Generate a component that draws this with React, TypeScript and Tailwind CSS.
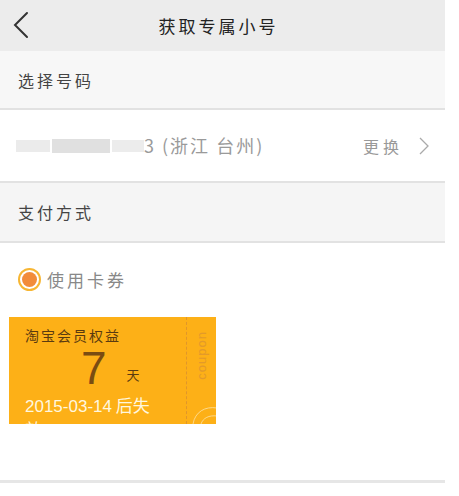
import React from 'react';

const cjk = { fontFamily: '"Noto Sans CJK SC", "Noto Sans", sans-serif' };
const latin = { fontFamily: '"Liberation Sans", Arial, sans-serif' };

export default function App() {
  return (
    <div className="w-[459px] h-[496px] bg-white overflow-hidden" style={cjk}>
      <div className="w-[445px]">
        {/* Header */}
        <div className="relative h-[51px] bg-[#ececec] flex items-center justify-center">
          <svg className="absolute left-[11px] top-[11px]" width="20" height="28" viewBox="0 0 20 28">
            <path d="M16 2 L4 14 L16 26" fill="none" stroke="#333" strokeWidth="2" strokeLinecap="round" />
          </svg>
          <h1 className="text-[17px] tracking-[3px] text-[#222] ml-[-8px]">获取专属小号</h1>
        </div>

        {/* 选择号码 */}
        <div className="h-[59px] bg-[#f7f7f7] flex items-center px-[18px] border-b-2 border-[#e2e2e2]">
          <span className="text-[16px] tracking-[3px] text-[#444]">选择号码</span>
        </div>

        {/* Number row */}
        <div className="h-[73px] bg-white flex items-center px-[16px] border-b-2 border-[#e2e2e2]">
          <div className="flex items-center">
            <div className="flex items-center gap-[2px] h-[16px] w-[128px]">
              <div className="h-[12px] w-[34px] bg-[#ebebeb]" />
              <div className="h-[14px] w-[58px] bg-[#e0e0e0]" />
              <div className="h-[12px] w-[32px] bg-[#ececec]" />
            </div>
            <span className="text-[18px] text-[#9a9a9a] tracking-[2px]">3 (浙江 台州)</span>
          </div>
          <div className="ml-auto flex items-center gap-[16px] text-[#999]">
            <span className="text-[16px] tracking-[4px]">更换</span>
            <svg width="10" height="18" viewBox="0 0 10 18">
              <path d="M1 1 L9 9 L1 17" fill="none" stroke="#aaa" strokeWidth="1.3" />
            </svg>
          </div>
        </div>

        {/* 支付方式 */}
        <div className="h-[60px] bg-[#f5f5f5] flex items-center px-[18px] border-b-2 border-[#e2e2e2]">
          <span className="text-[16px] tracking-[3px] text-[#444]">支付方式</span>
        </div>

        {/* Coupon area */}
        <div className="h-[240px] bg-white border-b-[3px] border-[#e6e6e6] pt-[24px]">
          <div className="flex items-center pl-[18px] gap-[6px]">
            <div className="w-[23px] h-[23px] rounded-full border-2 border-[#f7b633] flex items-center justify-center">
              <div className="w-[15px] h-[15px] rounded-full bg-[#f28c3a]" />
            </div>
            <span className="text-[17px] tracking-[3px] text-[#888]">使用卡券</span>
          </div>

          <div className="ml-[9px] mt-[24px] w-[207px] h-[107px] bg-[#fdb017] flex overflow-hidden">
            <div className="w-[177px] pl-[16px] pt-[8px] flex flex-col">
              <span className="text-[14px] tracking-[2px] text-[#5a3a10] leading-[20px]">淘宝会员权益</span>
              <div className="flex items-end pl-[56px] h-[48px]">
                <span className="text-[46px] leading-[46px] text-[#7a4c12] font-light" style={latin}>7</span>
                <span className="text-[13px] text-[#5a3a10] ml-[20px] mb-[6px]">天</span>
              </div>
              <span className="text-[17px] text-[#fff7df] leading-[24px] mt-[2px] whitespace-nowrap">
                <span style={latin}>2015-03-14</span> 后失
              </span>
              <span className="text-[17px] text-[#fff7df] leading-[20px]">效</span>
            </div>
            <div className="w-0 h-full border-l border-dashed border-[#e0962a]" />
            <div className="relative flex-1 flex items-start justify-center pt-[14px]">
              <span
                className="text-[13px] text-[#e39a2a] tracking-[1px] rotate-180"
                style={{ writingMode: 'vertical-rl', ...latin }}
              >
                coupon
              </span>
              <svg className="absolute left-[4px] bottom-0" width="26" height="24" viewBox="0 0 26 24">
                <path d="M2 24 C4 12 14 6 26 8" fill="none" stroke="#fde2a6" strokeWidth="0.8" />
                <path d="M10 24 C12 18 18 15 26 16" fill="none" stroke="#fde2a6" strokeWidth="0.8" />
              </svg>
            </div>
          </div>
        </div>
      </div>
    </div>
  );
}
